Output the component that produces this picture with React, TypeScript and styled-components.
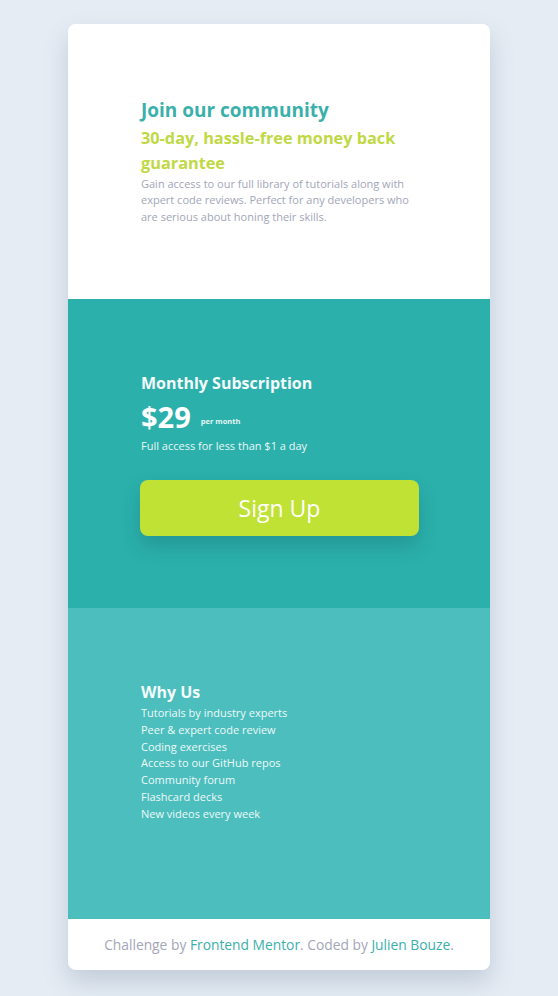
import React from "react";
import styled, { createGlobalStyle } from "styled-components";

const Global = createGlobalStyle`
  html, body { margin: 0; padding: 0; }
  body {
    background: #e5ecf4;
    font-family: "Open Sans", "Lato", sans-serif;
    -webkit-font-smoothing: antialiased;
  }
  * { box-sizing: border-box; }
`;

const Page = styled.main`
  padding: 24px 0 26px;
  display: flex;
  justify-content: center;
`;

const Card = styled.article`
  width: 422px;
  border-radius: 8px;
  overflow: hidden;
  background: #fff;
  box-shadow: 0 12px 24px rgba(70, 95, 125, 0.22);
  display: flex;
  flex-direction: column;
`;

const Section = styled.section<{ $bg: string; $h: number; $pt: number }>`
  background: ${(p) => p.$bg};
  height: ${(p) => p.$h}px;
  padding: ${(p) => p.$pt}px 71px 0 73px;
  display: flex;
  flex-direction: column;
`;

const Title = styled.h1`
  margin: 0 0 3px;
  font-size: 19px;
  line-height: 26px;
  font-weight: 700;
  color: #3ab0ab;
`;

const Subtitle = styled.h2`
  margin: 0;
  font-size: 16.3px;
  line-height: 25px;
  font-weight: 700;
  color: #bfd944;
`;

const Para = styled.p`
  margin: 0;
  font-size: 11px;
  line-height: 16.3px;
  color: #a3a6b8;
  max-width: 272px;
`;

const WhiteHead = styled.h3`
  margin: 0;
  font-size: 16px;
  line-height: 22px;
  font-weight: 700;
  color: #f4fbfb;
`;

const PriceRow = styled.div`
  display: flex;
  align-items: baseline;
  gap: 10px;
  margin-top: 6px;
  color: #fff;
`;

const Price = styled.span`
  font-size: 29px;
  line-height: 34px;
  font-weight: 700;
`;

const Per = styled.span`
  font-size: 7.5px;
  font-weight: 700;
  color: #e6f6f5;
  position: relative;
  top: -4px;
`;

const Small = styled.p`
  margin: 4px 0 0;
  font-size: 11px;
  line-height: 16px;
  color: #eaf7f6;
`;

const Button = styled.button`
  margin: 26px 0 0 -1px;
  width: 279px;
  height: 56px;
  border: none;
  border-radius: 8px;
  background: #bfe234;
  color: #fff;
  font-family: inherit;
  font-size: 23px;
  font-weight: 400;
  box-shadow: 0 10px 18px rgba(20, 90, 90, 0.28);
  cursor: pointer;
`;

const List = styled.ul`
  list-style: none;
  margin: 2px 0 0;
  padding: 0;
`;

const Item = styled.li`
  font-size: 11px;
  line-height: 16.8px;
  color: #eef9f9;
`;

const Footer = styled.footer`
  height: 51px;
  display: flex;
  align-items: center;
  justify-content: center;
  font-size: 13.8px;
  color: #a3a6b8;
`;

const Link = styled.a`
  color: #3ab0ab;
  text-decoration: none;
`;

const items = [
  "Tutorials by industry experts",
  "Peer & expert code review",
  "Coding exercises",
  "Access to our GitHub repos",
  "Community forum",
  "Flashcard decks",
  "New videos every week",
];

export default function App() {
  return (
    <>
      <Global />
      <Page>
        <Card>
          <Section $bg="#ffffff" $h={275} $pt={73}>
            <Title>Join our community</Title>
            <Subtitle>30-day, hassle-free money back guarantee</Subtitle>
            <Para>
              Gain access to our full library of tutorials along with expert code reviews.
              Perfect for any developers who are serious about honing their skills.
            </Para>
          </Section>
          <Section $bg="#2bb0ac" $h={309} $pt={73}>
            <WhiteHead>Monthly Subscription</WhiteHead>
            <PriceRow>
              <Price>$29</Price>
              <Per>per month</Per>
            </PriceRow>
            <Small>Full access for less than $1 a day</Small>
            <Button>Sign Up</Button>
          </Section>
          <Section $bg="#4bbebd" $h={311} $pt={73}>
            <WhiteHead>Why Us</WhiteHead>
            <List>
              {items.map((t) => (
                <Item key={t}>{t}</Item>
              ))}
            </List>
          </Section>
          <Footer>
            <span>
              Challenge by <Link href="#">Frontend Mentor</Link>. Coded by{" "}
              <Link href="#">Julien Bouze</Link>.
            </span>
          </Footer>
        </Card>
      </Page>
    </>
  );
}
